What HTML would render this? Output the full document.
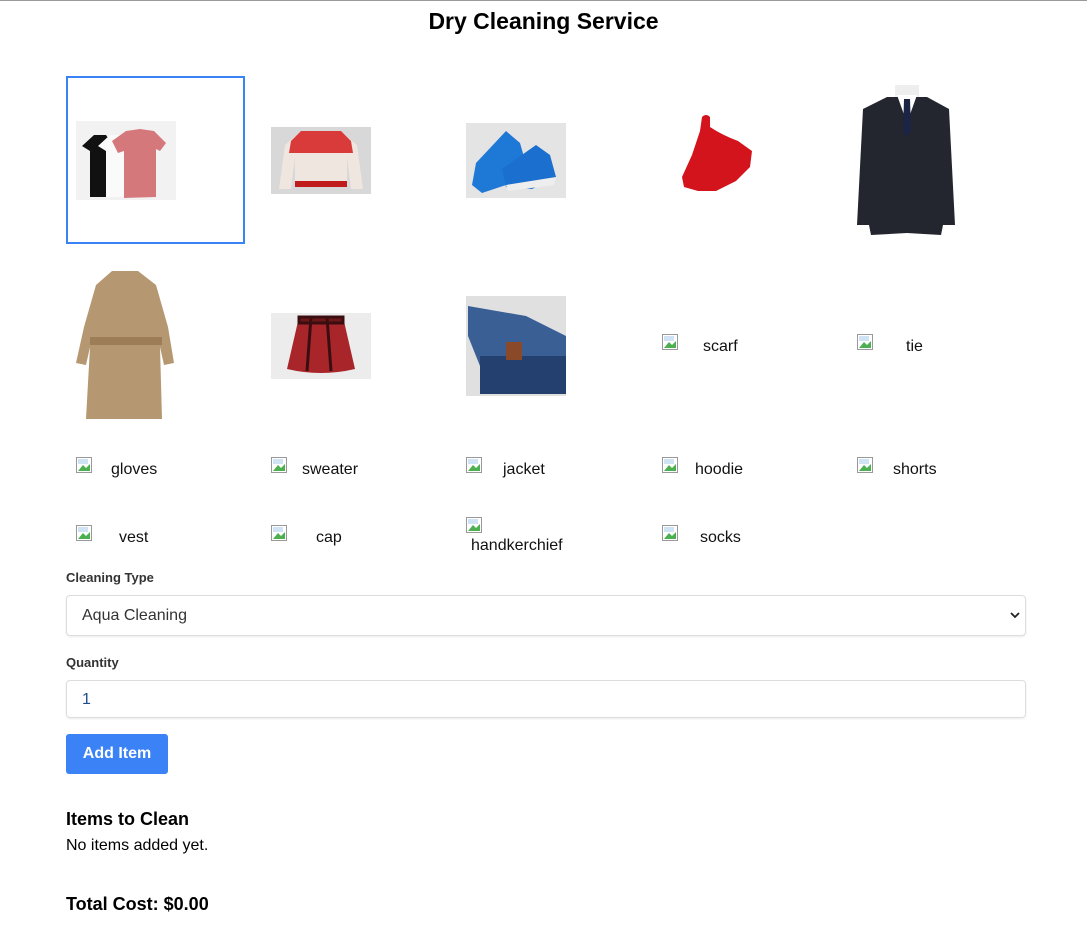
<!DOCTYPE html>
<html><head><meta charset="utf-8"><style>
*{box-sizing:border-box;margin:0;padding:0}
body{width:1087px;height:928px;background:#fff;font-family:"Liberation Sans",Arial,sans-serif;color:#000;position:relative;overflow:hidden;border-top:1px solid #999}
.a{position:absolute}
.lbl{position:absolute;font-size:16px;color:#111}
.bi{position:absolute;width:16px;height:16px}
h1{position:absolute;left:0;width:1087px;top:7px;text-align:center;font-size:23px;font-weight:bold}
.fl{position:absolute;left:66px;font-size:13px;font-weight:bold;color:#333}
.box{position:absolute;left:66px;width:960px;border:1px solid #ddd;border-radius:4px;font-size:16px;padding-left:15px}
</style></head><body>
<h1>Dry Cleaning Service</h1>
<div class="a" style="left:66px;top:75px;width:179px;height:168px;border:2px solid #3b82f6"></div>
<!-- tshirts -->
<svg class="a" style="left:76px;top:120px" width="100" height="79"><rect width="100" height="79" fill="#f2f2f2"/><path d="M6 25 L18 14 L30 14 L38 26 L32 30 V76 H14 V30 Z" fill="#111"/><path d="M22 25 L34 14 L46 14 L54 26 L48 30 V76 H30 V30 Z" fill="#fafafa"/><path d="M36 20 L50 10 L64 8 L78 10 L90 22 L84 30 L80 28 V76 L48 77 V30 L42 32 Z" fill="#d4787c"/></svg>
<!-- sweater -->
<svg class="a" style="left:271px;top:126px" width="100" height="67"><rect width="100" height="67" fill="#d8d8d8"/><path d="M30 4 H70 L86 18 L92 62 H80 L76 30 V60 H24 V30 L20 62 H8 L14 18 Z" fill="#efe6df"/><path d="M20 14 L30 4 H70 L80 14 L82 26 H18 Z" fill="#d93a3a"/><rect x="24" y="54" width="52" height="6" fill="#c01c1c"/></svg>
<!-- shoes -->
<svg class="a" style="left:466px;top:122px" width="100" height="75"><rect width="100" height="75" fill="#e4e4e4"/><path d="M10 40 L40 8 L54 20 L58 34 L40 62 L16 70 L6 62 Z" fill="#1e78d6"/><path d="M36 46 L70 22 L84 32 L90 54 L66 66 L40 64 Z" fill="#1a6fcf"/><path d="M40 62 L90 54 L88 62 L42 68 Z" fill="#eee"/></svg>
<!-- dress -->
<svg class="a" style="left:662px;top:110px" width="100" height="92"><path d="M40 6 Q44 2 48 6 L48 16 Q60 24 76 30 L90 40 L88 56 L74 70 L54 80 L36 80 L22 76 L20 66 L30 44 L38 20 Z" fill="#d3141c"/></svg>
<!-- suit -->
<svg class="a" style="left:857px;top:82px" width="100" height="155"><rect x="38" y="2" width="24" height="30" fill="#eee"/><path d="M30 14 L70 14 L92 26 L98 142 L86 142 L84 152 L50 150 L14 152 L12 142 L0 142 L6 26 Z" fill="#23252f"/><path d="M40 12 L50 40 L60 12 Z" fill="#fff"/><path d="M47 16 L53 16 L54 48 L50 54 L46 48 Z" fill="#1b2444"/></svg>
<!-- coat -->
<svg class="a" style="left:76px;top:266px" width="100" height="155"><path d="M36 4 H62 L80 18 L92 60 L98 96 L88 98 L84 80 L86 152 H10 L14 80 L10 98 L0 96 L8 60 L20 18 Z" fill="#b59772"/><rect x="14" y="70" width="72" height="8" fill="#9c7d58"/></svg>
<!-- skirt -->
<svg class="a" style="left:271px;top:312px" width="100" height="66"><rect width="100" height="66" fill="#ececec"/><path d="M28 4 H72 L84 56 Q50 64 16 56 Z" fill="#a8262a"/><path d="M28 4 H72 V10 H28 Z M40 4 L36 58 M56 4 L60 58" stroke="#3a0e10" stroke-width="3" fill="#6c1618"/></svg>
<!-- jeans -->
<svg class="a" style="left:466px;top:295px" width="100" height="100"><rect width="100" height="100" fill="#e0e0e0"/><path d="M2 10 L60 20 L100 40 V98 H14 V70 L2 40 Z" fill="#3a5f94"/><rect x="14" y="60" width="86" height="38" fill="#23406e"/><rect x="40" y="46" width="16" height="18" fill="#8a4a2a"/></svg>
<!-- broken images -->
<svg width="0" height="0" style="position:absolute"><defs><g id="bi"><rect x="0.5" y="0.5" width="15" height="15" fill="#fff" stroke="#999"/><path d="M2 14 L7 8 L10 11 L14 7 V14 Z" fill="#4caf50"/><rect x="2" y="2" width="10" height="5" fill="#cfe3f5"/></g></defs></svg>
<svg class="bi" style="left:662px;top:333px"><use href="#bi"/></svg><div class="lbl" style="left:703px;top:337px">scarf</div>
<svg class="bi" style="left:857px;top:333px"><use href="#bi"/></svg><div class="lbl" style="left:906px;top:337px">tie</div>
<svg class="bi" style="left:76px;top:456px"><use href="#bi"/></svg><div class="lbl" style="left:111px;top:460px">gloves</div>
<svg class="bi" style="left:271px;top:456px"><use href="#bi"/></svg><div class="lbl" style="left:302px;top:460px">sweater</div>
<svg class="bi" style="left:466px;top:456px"><use href="#bi"/></svg><div class="lbl" style="left:503px;top:460px">jacket</div>
<svg class="bi" style="left:662px;top:456px"><use href="#bi"/></svg><div class="lbl" style="left:695px;top:460px">hoodie</div>
<svg class="bi" style="left:857px;top:456px"><use href="#bi"/></svg><div class="lbl" style="left:893px;top:460px">shorts</div>
<svg class="bi" style="left:76px;top:524px"><use href="#bi"/></svg><div class="lbl" style="left:119px;top:528px">vest</div>
<svg class="bi" style="left:271px;top:524px"><use href="#bi"/></svg><div class="lbl" style="left:316px;top:528px">cap</div>
<svg class="bi" style="left:466px;top:516px"><use href="#bi"/></svg><div class="lbl" style="left:471px;top:536px">handkerchief</div>
<svg class="bi" style="left:662px;top:524px"><use href="#bi"/></svg><div class="lbl" style="left:700px;top:528px">socks</div>
<!-- form -->
<div class="fl" style="top:569px">Cleaning Type</div>
<div class="box" style="top:594px;height:41px;line-height:40px;color:#333;box-shadow:0 1px 2px rgba(0,0,0,.08)">Aqua Cleaning
<svg class="a" style="right:5px;top:15px" width="10" height="8"><path d="M1 2 L5 6 L9 2" stroke="#222" stroke-width="1.8" fill="none"/></svg></div>
<div class="fl" style="top:654px">Quantity</div>
<div class="box" style="top:679px;height:38px;line-height:37px;color:#1f4e8c;box-shadow:0 1px 2px rgba(0,0,0,.08)">1</div>
<div class="a" style="left:66px;top:733px;width:102px;height:40px;background:#3b82f6;border-radius:3px;color:#fff;font-weight:bold;font-size:16px;line-height:40px;text-align:center">Add Item</div>
<div class="a" style="left:66px;top:808px;font-size:18px;font-weight:bold">Items to Clean</div>
<div class="a" style="left:66px;top:836px;font-size:16px">No items added yet.</div>
<div class="a" style="left:66px;top:893px;font-size:18px;font-weight:bold">Total Cost: $0.00</div>
</body></html>
